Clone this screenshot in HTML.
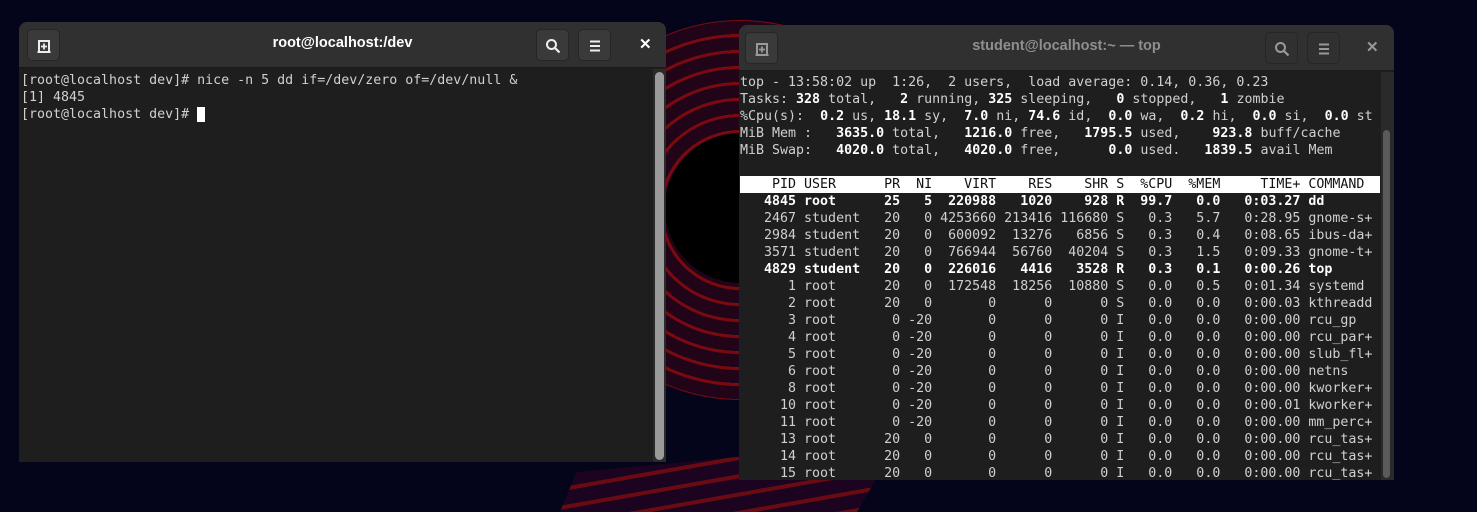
<!DOCTYPE html>
<html style="width:1477px;height:512px;overflow:hidden"><head><meta charset="utf-8"><style>
*{margin:0;padding:0;box-sizing:border-box}
body{width:1477px;height:512px;overflow:hidden;background:#04051a;position:relative;font-family:"DejaVu Sans Mono","Liberation Mono",monospace}
.bg{position:absolute;left:550px;top:20px;width:380px;height:380px;border-radius:50%;
background:repeating-radial-gradient(circle at 50% 50%,#220418 0 13px,#7a0a10 13px 16px);}
.bg2{position:absolute;left:560px;top:455px;width:330px;height:57px;overflow:hidden;
background:repeating-linear-gradient(170deg,#1c0420 0 14px,#6a0a12 14px 18px);clip-path:polygon(5% 30%,60% 0,100% 0,90% 100%,0 100%)}
.hole{position:absolute;left:665px;top:133px;width:150px;height:150px;border-radius:50%;background:#000}
.win{position:absolute;background:#1e1e1e;border-radius:8px 8px 0 0;overflow:hidden}
.tb{height:46px;background:#303030;position:relative;border-bottom:1px solid #1a1a1a}
.tb .t{position:absolute;left:0;right:0;top:13px;text-align:center;font:bold 14.5px "Liberation Sans",sans-serif;color:#fff}
.btn{position:absolute;top:7px;width:33px;height:32px;border-radius:5px;background:#3a3a3a;border:1px solid #262626}
.btn svg{position:absolute;left:8px;top:8px}
.x{position:absolute;top:13px;color:#fff;font:bold 15px "Liberation Sans",sans-serif}
pre{font-family:"DejaVu Sans Mono",monospace;font-size:13.3px;line-height:17px;color:#d0d0d0;position:absolute}
b{color:#fff}
.hd{background:#fff;color:#111;display:inline-block;width:640px}
.sb{position:absolute;width:9px;border-radius:5px;background:#9a9a9a}
.sbt{position:absolute;background:#2a2a2a}
</style></head><body>
<div class="bg"></div><div class="bg2"></div><div class="hole"></div>

<div class="win" style="left:19px;top:22px;width:647px;height:440px">
 <div class="tb">
  <div class="btn" style="left:8px"><svg width="16" height="16" viewBox="0 0 16 16"><path d="M3 14V3h10v11M1.5 14h13" fill="none" stroke="#eee" stroke-width="2"/><path d="M8 5.5v6M5 8.5h6" stroke="#eee" stroke-width="1.8"/></svg></div>
  <div class="t">root@localhost:/dev</div>
  <div class="btn" style="left:517px"><svg width="16" height="16" viewBox="0 0 16 16"><circle cx="6.5" cy="6.5" r="4.5" fill="none" stroke="#eee" stroke-width="2"/><path d="M10 10l4.5 4.5" stroke="#eee" stroke-width="2.2"/></svg></div>
  <div class="btn" style="left:559px"><svg width="16" height="16" viewBox="0 0 16 16"><path d="M3 3.5h10M3 8h10M3 12.5h10" stroke="#eee" stroke-width="2"/></svg></div>
  <div class="x" style="left:620px">✕</div>
 </div>
 <pre style="left:2px;top:50px">[root@localhost dev]# nice -n 5 dd if=/dev/zero of=/dev/null &amp;
[1] 4845
[root@localhost dev]# <span style="background:#fff">&nbsp;</span></pre>
 <div class="sbt" style="left:634px;top:47px;width:13px;height:393px"></div>
 <div class="sb" style="left:636px;top:50px;height:388px"></div>
</div>

<div class="win" style="left:739px;top:25px;width:655px;height:455px">
 <div class="tb">
  <div class="btn" style="left:6px"><svg width="16" height="16" viewBox="0 0 16 16"><path d="M3 14V3h10v11M1.5 14h13" fill="none" stroke="#999" stroke-width="2"/><path d="M8 5.5v6M5 8.5h6" stroke="#999" stroke-width="1.8"/></svg></div>
  <div class="t" style="color:#8f8f8f">student@localhost:~ — top</div>
  <div class="btn" style="left:526px;background:#303030"><svg width="16" height="16" viewBox="0 0 16 16"><circle cx="6.5" cy="6.5" r="4.5" fill="none" stroke="#999" stroke-width="2"/><path d="M10 10l4.5 4.5" stroke="#999" stroke-width="2.2"/></svg></div>
  <div class="btn" style="left:568px;background:#303030"><svg width="16" height="16" viewBox="0 0 16 16"><path d="M3 3.5h10M3 8h10M3 12.5h10" stroke="#999" stroke-width="2"/></svg></div>
  <div class="x" style="left:627px;color:#999">✕</div>
 </div>
 <pre style="left:1px;top:49px">top - 13:58:02 up  1:26,  2 users,  load average: 0.14, 0.36, 0.23
Tasks: <b>328</b> total,   <b>2</b> running, <b>325</b> sleeping,   <b>0</b> stopped,   <b>1</b> zombie
%Cpu(s):  <b>0.2</b> us, <b>18.1</b> sy,  <b>7.0</b> ni, <b>74.6</b> id,  <b>0.0</b> wa,  <b>0.2</b> hi,  <b>0.0</b> si,  <b>0.0</b> st
MiB Mem :   <b>3635.0</b> total,   <b>1216.0</b> free,   <b>1795.5</b> used,    <b>923.8</b> buff/cache
MiB Swap:   <b>4020.0</b> total,   <b>4020.0</b> free,      <b>0.0</b> used.   <b>1839.5</b> avail Mem

<span class="hd">    PID USER      PR  NI    VIRT    RES    SHR S  %CPU  %MEM     TIME+ COMMAND</span>
<b>   4845 root      25   5  220988   1020    928 R  99.7   0.0   0:03.27 dd</b>
   2467 student   20   0 4253660 213416 116680 S   0.3   5.7   0:28.95 gnome-s+
   2984 student   20   0  600092  13276   6856 S   0.3   0.4   0:08.65 ibus-da+
   3571 student   20   0  766944  56760  40204 S   0.3   1.5   0:09.33 gnome-t+
<b>   4829 student   20   0  226016   4416   3528 R   0.3   0.1   0:00.26 top</b>
      1 root      20   0  172548  18256  10880 S   0.0   0.5   0:01.34 systemd
      2 root      20   0       0      0      0 S   0.0   0.0   0:00.03 kthreadd
      3 root       0 -20       0      0      0 I   0.0   0.0   0:00.00 rcu_gp
      4 root       0 -20       0      0      0 I   0.0   0.0   0:00.00 rcu_par+
      5 root       0 -20       0      0      0 I   0.0   0.0   0:00.00 slub_fl+
      6 root       0 -20       0      0      0 I   0.0   0.0   0:00.00 netns
      8 root       0 -20       0      0      0 I   0.0   0.0   0:00.00 kworker+
     10 root       0 -20       0      0      0 I   0.0   0.0   0:00.01 kworker+
     11 root       0 -20       0      0      0 I   0.0   0.0   0:00.00 mm_perc+
     13 root      20   0       0      0      0 I   0.0   0.0   0:00.00 rcu_tas+
     14 root      20   0       0      0      0 I   0.0   0.0   0:00.00 rcu_tas+
     15 root      20   0       0      0      0 I   0.0   0.0   0:00.00 rcu_tas+</pre>
 <div class="sbt" style="left:642px;top:47px;width:13px;height:408px"></div>
 <div class="sb" style="left:644px;top:105px;width:7px;height:348px;background:#5a5a5a"></div>
</div>
</body></html>
